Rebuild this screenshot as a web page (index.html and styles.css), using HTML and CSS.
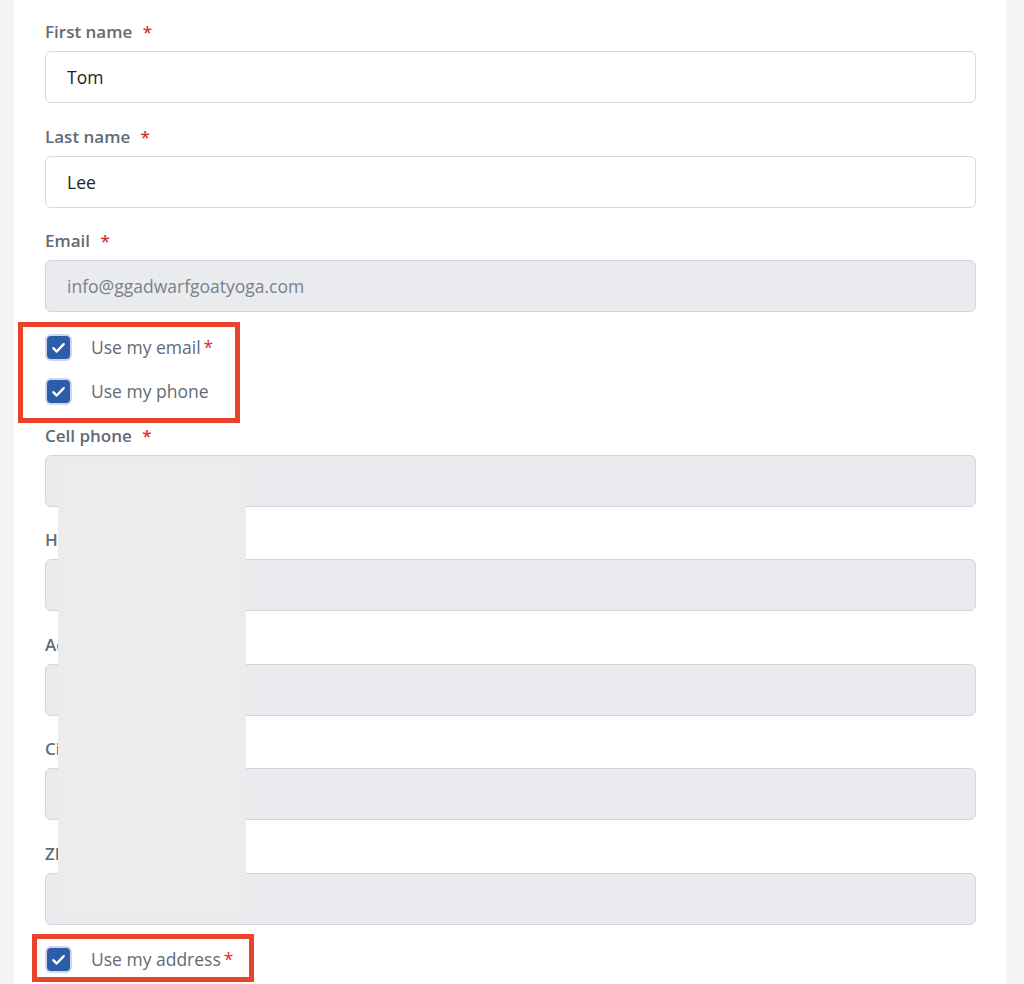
FILE: index.html
```html
<!DOCTYPE html>
<html lang="en">

<head>
    <meta charset="UTF-8">
    <meta name="viewport" content="width=device-width, initial-scale=1.0">
    <title>Contact details</title>
    <link rel="stylesheet" href="styles.css">
</head>

<body>
    <form class="card">
        <div class="field">
            <label for="first_name">First name <span class="req">*</span></label>
            <input type="text" id="first_name" value="Tom">
        </div>
        <div class="field">
            <label for="last_name">Last name <span class="req">*</span></label>
            <input type="text" id="last_name" value="Lee">
        </div>
        <div class="field">
            <label for="email">Email <span class="req">*</span></label>
            <input type="text" id="email" value="info@ggadwarfgoatyoga.com" disabled>
        </div>

        <div class="checks marked">
            <label class="check-row">
                <span class="check"><svg viewBox="0 0 16 16"><path d="M3.6 8.6l2.9 2.8L12.4 5.2" /></svg></span>
                <span>Use my email<span class="req tight">*</span></span>
            </label>
            <label class="check-row">
                <span class="check"><svg viewBox="0 0 16 16"><path d="M3.6 8.6l2.9 2.8L12.4 5.2" /></svg></span>
                <span>Use my phone</span>
            </label>
        </div>

        <div class="field">
            <label for="cell">Cell phone <span class="req">*</span></label>
            <input type="text" id="cell" disabled>
        </div>
        <div class="field">
            <label for="home">Home phone</label>
            <input type="text" id="home" disabled>
        </div>
        <div class="field">
            <label for="address">Address</label>
            <input type="text" id="address" disabled>
        </div>
        <div class="field">
            <label for="city">City</label>
            <input type="text" id="city" disabled>
        </div>
        <div class="field">
            <label for="zip">ZIP code</label>
            <input type="text" id="zip" disabled>
        </div>

        <div class="checks marked last">
            <label class="check-row">
                <span class="check"><svg viewBox="0 0 16 16"><path d="M3.6 8.6l2.9 2.8L12.4 5.2" /></svg></span>
                <span>Use my address<span class="req tight">*</span></span>
            </label>
        </div>

        <div class="redacted"></div>
    </form>
</body>

</html>
```

FILE: styles.css
```css
body {
    margin: 0;
    padding: 0;
    background-color: #f5f5f6;
    font-family: "Open Sans", "Liberation Sans", sans-serif;
    color: #626a75;
}

.card {
    position: relative;
    width: 931px;
    margin-left: 14px;
    padding: 20px 30px 30px 31px;
    background-color: white;
    min-height: 934px;
}

.field {
    display: flex;
    flex-direction: column;
    margin-bottom: 21.5px;
}

.field label {
    font-size: 17px;
    font-weight: 600;
    line-height: 24px;
    margin-bottom: 7px;
    color: #626a75;
}

.req {
    color: #d9342b;
    margin-left: 6px;
}

.req.tight {
    margin-left: 3px;
}

.field input {
    box-sizing: border-box;
    width: 100%;
    height: 52px;
    padding: 0 21px;
    font-family: inherit;
    font-size: 17.5px;
    color: #1f2328;
    background-color: white;
    border: 1px solid #d6d9dd;
    border-radius: 6px;
}

.field input:disabled {
    background-color: #e9ebee;
    border-color: #d2d5da;
    color: #7a818b;
}

.checks {
    position: relative;
    display: flex;
    flex-direction: column;
    gap: 18px;
    margin-top: 0.5px;
    padding-bottom: 20px;
}

.check-row {
    display: flex;
    align-items: center;
    gap: 20px;
    height: 26px;
    font-size: 17.5px;
    color: #626a75;
}

.check {
    box-sizing: border-box;
    width: 23px;
    height: 23px;
    margin: 2px 1px 1px 2px;
    background-color: #2d5ca8;
    border-radius: 4px;
    box-shadow: 0 0 0 2px #cbd8ef;
    display: flex;
    align-items: center;
    justify-content: center;
}

.check svg {
    width: 19px;
    height: 19px;
    fill: none;
    stroke: white;
    stroke-width: 2;
    stroke-linecap: round;
    stroke-linejoin: round;
}

/* red annotation boxes */
.marked::after {
    content: "";
    position: absolute;
    left: -27px;
    top: -12px;
    width: 212px;
    height: 91px;
    border: 5px solid #e8432d;
}

.marked.last {
    margin-top: 0.5px;
}

.marked.last::after {
    left: -13px;
    top: -12px;
    height: 38px;
}

.redacted {
    position: absolute;
    left: 44px;
    top: 458px;
    width: 188px;
    height: 460px;
    background-color: #ececec;
}
```
